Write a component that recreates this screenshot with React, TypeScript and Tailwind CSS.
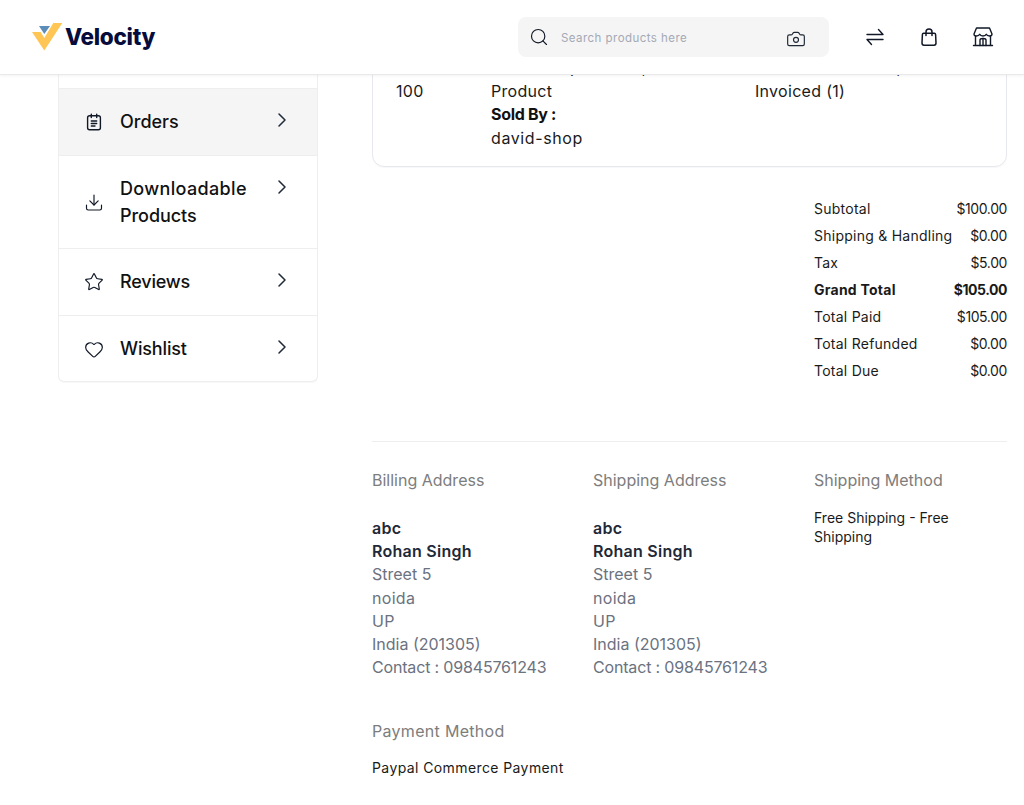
import { ChevronRight, Download, Star, Heart, Search, Camera } from "lucide-react";

function Logo() {
  return (
    <svg width="32" height="30" viewBox="0 0 32 30" className="shrink-0">
      <polygon points="0,10 8.7,10 12.3,16 21.3,1 30.3,1 12.3,28.5" fill="#FFC555" />
      <polygon points="7,4 18,4 12.3,12" fill="#5B8DB8" />
    </svg>
  );
}

function SwapIcon() {
  return (
    <svg width="20" height="20" viewBox="0 0 20 20" fill="none" stroke="#111827" strokeWidth="1.4" strokeLinecap="round" strokeLinejoin="round">
      <path d="M2 7.5 H18 L13.5 2.5" />
      <path d="M18 12.5 H2 L6.5 17.5" />
    </svg>
  );
}

function BagIcon() {
  return (
    <svg width="20" height="20" viewBox="0 0 20 20" fill="none" stroke="#111827" strokeWidth="1.5" strokeLinecap="round" strokeLinejoin="round">
      <path d="M4.6 6.3 H15.4 Q16.5 6.3 16.6 7.5 L17 16 Q17 18.2 15 18.2 H5 Q3 18.2 3 16 L3.4 7.5 Q3.5 6.3 4.6 6.3 Z" />
      <path d="M7 8.5 V5 Q7 2 10 2 Q13 2 13 5 V8.5" />
    </svg>
  );
}

function StoreIcon() {
  return (
    <svg width="22" height="22" viewBox="0 0 22 22" fill="none" stroke="#111827" strokeWidth="1.4" strokeLinecap="round" strokeLinejoin="round">
      <path d="M4.5 2 H17.5 L20 8 Q20 10 17.6 10 Q15 10 14.3 8.3 Q13.5 10 11 10 Q8.5 10 7.7 8.3 Q7 10 4.4 10 Q2 10 2 8 Z" />
      <path d="M3.5 10 V19.5 M18.5 10 V19.5 M1.5 19.5 H20.5" />
      <path d="M8 19.5 V14 Q8 12.5 11 12.5 Q14 12.5 14 14 V19.5" />
      <path d="M11 12.5 V19.5" />
    </svg>
  );
}

function OrdersIcon() {
  return (
    <svg width="18" height="18" viewBox="0 0 18 18" fill="none" stroke="#111827" strokeWidth="1.4" strokeLinecap="round" strokeLinejoin="round">
      <rect x="2.6" y="2.8" width="12.8" height="14" rx="2" />
      <path d="M6.3 1.3 V4.5 M11.7 1.3 V4.5 M6.3 8 H11.7 M6.3 10.5 H11.7 M6.3 13 H10" />
    </svg>
  );
}

function NavRow({ icon, children, active, tall, last }: { icon: React.ReactNode; children: React.ReactNode; active?: boolean; tall?: boolean; last?: boolean }) {
  const height = tall ? "h-[93px]" : last ? "h-[66px]" : "h-[67px]";
  return (
    <div className={`flex items-center pl-[25px] pr-[23px] ${height} ${last ? "" : "border-b border-[#eeeeee]"} ${active ? "bg-[#f5f5f5]" : ""}`}>
      <span className="flex w-[20px] justify-center">{icon}</span>
      <span className="-mt-[1px] ml-[16px] flex-1 text-[18px] leading-[27px] font-medium text-[#111111]">{children}</span>
      <span className={`flex ${tall ? "self-start pt-[23px]" : ""}`}>
        <ChevronRight size={24} strokeWidth={1.5} className="-mt-[4px] text-[#1f2937]" />
      </span>
    </div>
  );
}

function Total({ label, value, bold }: { label: string; value: string; bold?: boolean }) {
  return (
    <div className={`flex h-[27px] items-center justify-between text-[14px] tracking-[0.25px] text-[#1a1a1a] ${bold ? "font-bold" : ""}`}>
      <span>{label}</span>
      <span className={bold ? "tracking-[-0.45px]" : "tracking-[-0.4px]"}>{value}</span>
    </div>
  );
}

function Lines() {
  return (
    <div className="mt-[24.7px] text-[16px] leading-[23.3px] tracking-[0.3px] text-[#6b7280]">
      <p className="font-semibold tracking-[0.25px] text-[#1f2937]">abc</p>
      <p className="font-semibold tracking-[0.25px] text-[#1f2937]">Rohan Singh</p>
      <p className="tracking-[0px]">Street 5</p>
      <p>noida</p>
      <p>UP</p>
      <p className="tracking-[0px]">India (201305)</p>
      <p className="tracking-[-0.17px]">Contact : 09845761243</p>
    </div>
  );
}

function Title({ children }: { children: React.ReactNode }) {
  return <h3 className="h-[24px] text-[16px] leading-[24px] text-[#7d7d7d]">{children}</h3>;
}

export default function App() {
  return (
    <div className="h-[805px] overflow-hidden bg-white font-['Inter','Noto_Sans',sans-serif]">
      <header className="relative z-10 flex h-[75px] items-center border-b border-[#e9e9e9] bg-white pl-[32px] shadow-[0_1px_3px_rgba(0,0,0,0.05)]">
        <Logo />
        <span className="ml-[1px] w-[90px] text-[22.5px] leading-[30px] font-extrabold tracking-[-0.3px] whitespace-nowrap text-[#060c3b]">Velocity</span>
        <div className="ml-[363px] flex h-[40px] w-[311px] items-center rounded-lg bg-[#f5f5f5] pl-[11px] pr-[23px]">
          <Search size={20} strokeWidth={1.4} className="text-[#111827]" />
          <span className="mt-[1px] ml-[12px] flex-1 text-[11.5px] leading-[16px] tracking-[0.45px] text-[#a4a9b4]">Search products here</span>
          <Camera size={20} strokeWidth={1.4} className="mt-[3px] text-[#1f2937]" />
        </div>
        <div className="ml-[36px] flex items-center gap-[34px]">
          <SwapIcon />
          <BagIcon />
          <div className="-ml-[1px]"><StoreIcon /></div>
        </div>
      </header>

      <div className="flex gap-[54px] pl-[58px] pr-[17px]">
        <aside className="h-[307px] w-[260px] shrink-0 rounded-b-md border-x border-b border-[#eeeeee] shadow-[0_1px_1px_rgba(0,0,0,0.03)]">
          <div className="h-[14px] border-b border-[#eeeeee]" />
          <NavRow active icon={<OrdersIcon />}><span className="tracking-[0px]">Orders</span></NavRow>
          <NavRow tall icon={<Download size={23} strokeWidth={1.4} className="text-[#111827]" />}>
            <span className="tracking-[0.35px]">Downloadable</span>
            <br />
            <span className="tracking-[-0.05px]">Products</span>
          </NavRow>
          <NavRow icon={<Star size={22} strokeWidth={1.4} className="text-[#111827]" />}><span className="tracking-[-0.2px]">Reviews</span></NavRow>
          <NavRow last icon={<Heart size={23} strokeWidth={1.4} className="text-[#111827]" />}><span className="tracking-[-0.15px]">Wishlist</span></NavRow>
        </aside>

        <main className="min-w-0 flex-1">
          <div className="-mt-[20px] flex h-[112px] rounded-xl border border-[#e7e7ee] pl-[23px] text-[16px] leading-[23.5px] tracking-[0.3px] text-[#1a1a1a] shadow-[0_1px_1px_rgba(0,0,0,0.03)]">
            <div className="w-[95px] pt-[23.5px]">100</div>
            <div className="w-[264px]">
              <p>Hello Sample Items,</p>
              <p>Product</p>
              <p className="font-bold tracking-[-0.3px] text-[#111111]">Sold By :</p>
              <p className="tracking-[0.6px]">david-shop</p>
            </div>
            <div>
              <p className="tracking-[-0.1px]">Ordered (1) Refund,</p>
              <p>Invoiced (1)</p>
            </div>
          </div>

          <div className="mt-[28px] ml-auto w-[193px]">
            <Total label="Subtotal" value="$100.00" />
            <Total label="Shipping & Handling" value="$0.00" />
            <Total label="Tax" value="$5.00" />
            <Total bold label="Grand Total" value="$105.00" />
            <Total label="Total Paid" value="$105.00" />
            <Total label="Total Refunded" value="$0.00" />
            <Total label="Total Due" value="$0.00" />
          </div>

          <div className="mt-[57px] border-t border-[#eeeeee] pt-[26px]">
            <div className="flex">
              <div className="w-[221px]">
                <Title>Billing Address</Title>
                <Lines />
              </div>
              <div className="w-[221px]">
                <Title>Shipping Address</Title>
                <Lines />
              </div>
              <div className="w-[193px]">
                <Title>Shipping Method</Title>
                <p className="mt-[15.5px] text-[14px] leading-[19.5px] text-[#1a1a1a]">Free Shipping - Free Shipping</p>
              </div>
            </div>
            <div className="mt-[39px] tracking-[0.3px]"><Title>Payment Method</Title></div>
            <p className="mt-[15px] text-[14px] leading-[20px] tracking-[0.4px] text-[#1a1a1a]">Paypal Commerce Payment</p>
          </div>
        </main>
      </div>
    </div>
  );
}
